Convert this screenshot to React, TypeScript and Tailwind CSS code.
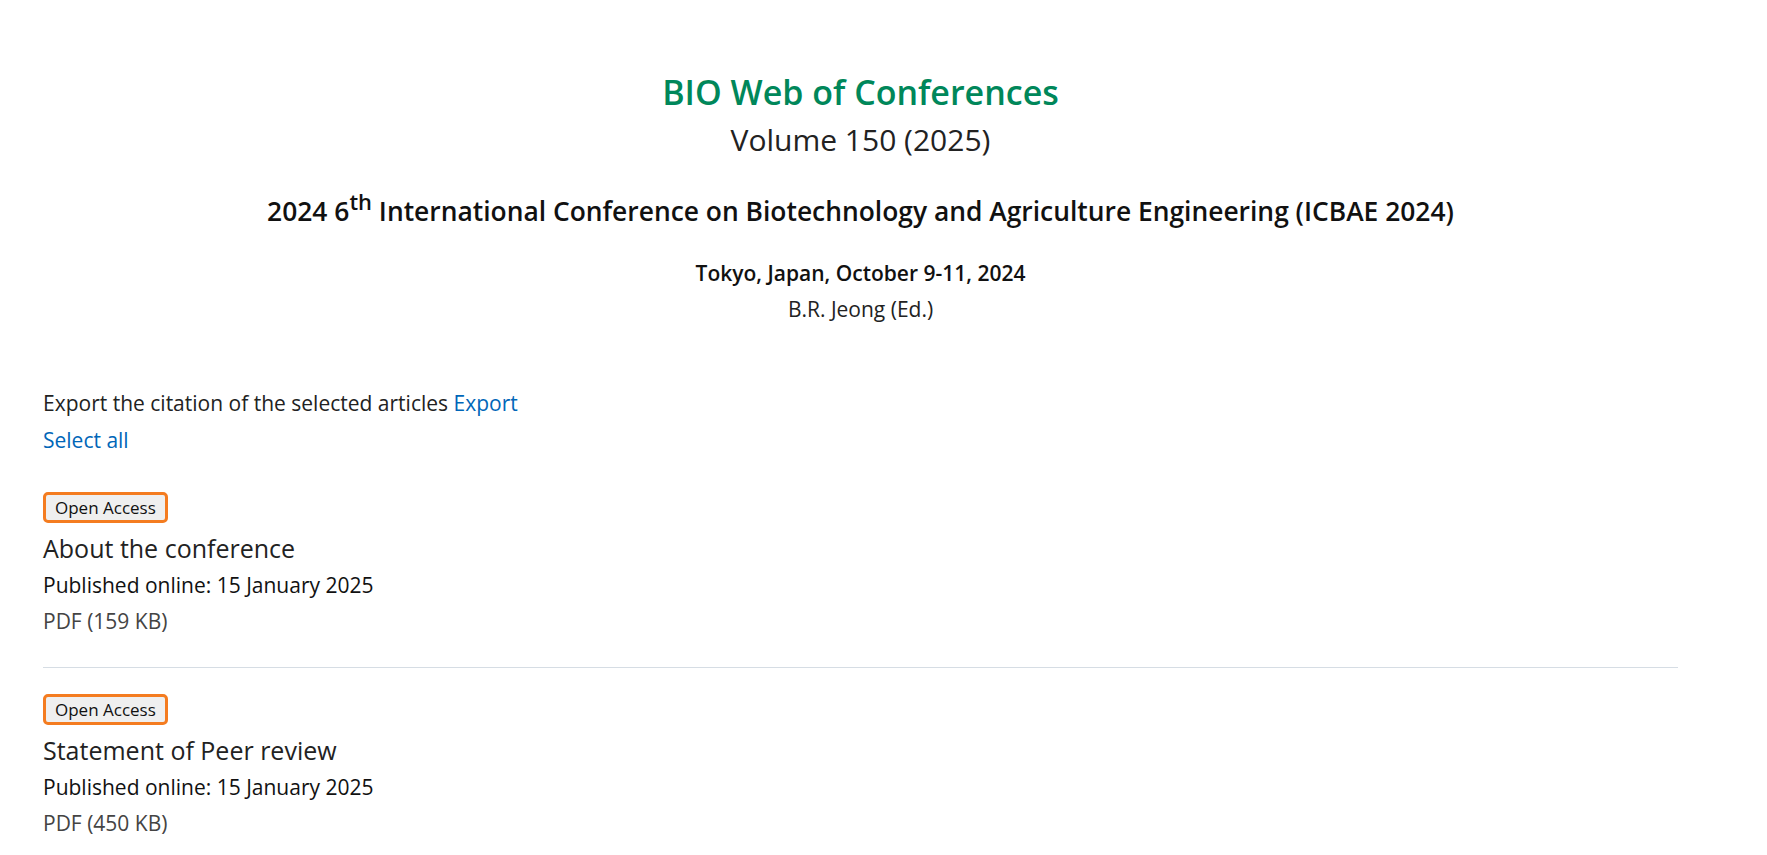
import React from "react";

function Article({ title, pdf }: { title: string; pdf: string }) {
  return (
    <div className="flex flex-col items-start">
      <span className="mb-[8px] inline-block h-[31px] rounded-[5px] border-[3px] border-[#f47c20] bg-[#efefef] px-[9px] text-[17px] font-medium leading-[25px] text-[#111]">
        Open Access
      </span>
      <div className="-mt-[1px] text-[25px] leading-[36px] text-[#222]">{title}</div>
      <div className="text-[21px] leading-[38px] text-[#111]">Published online: 15 January 2025</div>
      <div className="text-[21px] leading-[34px] text-[#444]">{pdf}</div>
    </div>
  );
}

export default function App() {
  return (
    <div className="min-h-[855px] bg-white font-['Open_Sans',sans-serif]">
      <div className="ml-[43px] w-[1635px]">
        <div className="flex flex-col items-center pt-[69px] text-center">
          <h1 className="text-[34px] font-semibold leading-[46px] text-[#00875a]">BIO Web of Conferences</h1>
          <h2 className="text-[30px] leading-[50px] text-[#222]">Volume 150 (2025)</h2>
          <h3 className="mt-[26px] text-[26.4px] font-semibold leading-[40px] text-[#111]">
            2024 6<sup className="text-[0.83em]">th</sup> International Conference on Biotechnology and Agriculture Engineering (ICBAE 2024)
          </h3>
          <div className="mt-[25px] text-[21px] font-semibold leading-[34px] text-[#111]">Tokyo, Japan, October 9-11, 2024</div>
          <div className="text-[21px] leading-[38px] text-[#222]">B.R. Jeong (Ed.)</div>
        </div>
        <div className="mt-[57px] text-[21px] leading-[36px] text-[#222]">
          Export the citation of the selected articles <span className="text-[#0066b8]">Export</span>
        </div>
        <div className="text-[21px] leading-[38px] text-[#0066b8]">Select all</div>
        <div className="mt-[33px]">
          <Article title="About the conference" pdf="PDF (159 KB)" />
        </div>
        <div className="mt-[29px] border-t border-[#d6dde4]" />
        <div className="mt-[26px]">
          <Article title="Statement of Peer review" pdf="PDF (450 KB)" />
        </div>
      </div>
    </div>
  );
}
